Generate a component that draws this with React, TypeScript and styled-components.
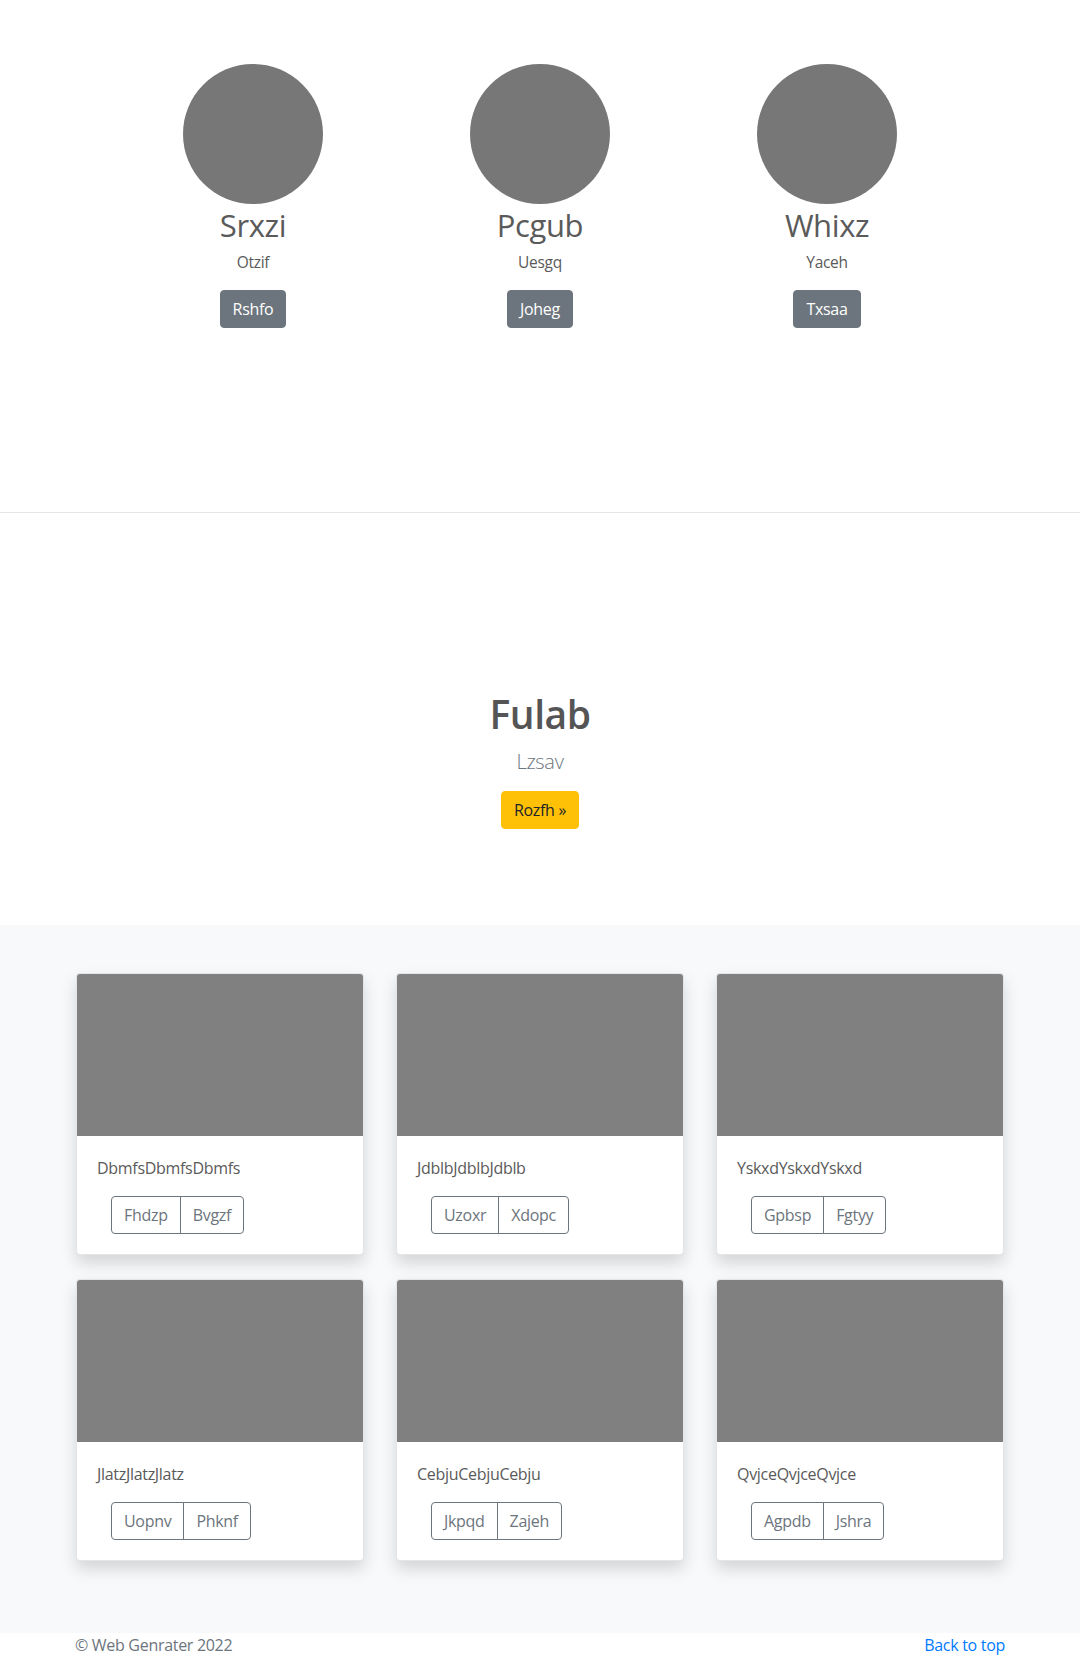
import React, { FunctionComponent } from "react";
import styled, { createGlobalStyle } from "styled-components";

const GlobalStyle = createGlobalStyle`
  * {
    box-sizing: border-box;
  }
  body {
    margin: 0;
    font-family: "Open Sans", "Liberation Sans", sans-serif;
    font-size: 16px;
    line-height: 1.5;
    letter-spacing: -0.3px;
    color: #5a5a5a;
    background: #fff;
  }
`;

const Palette = {
  text: "#5a5a5a",
  muted: "#6c757d",
  secondary: "#6c757d",
  warning: "#ffc107",
  dark: "#212529",
  light: "#f8f9fa",
  link: "#007bff",
  placeholder: "#808080",
  avatar: "#777777",
};

/* team row */

const Styles = {
  Team: styled.section`
    padding: 64px 0 184px;
  `,
  TeamRow: styled.div`
    display: grid;
    grid-template-columns: repeat(3, 287px);
    justify-content: center;
  `,
  Member: styled.div`
    display: flex;
    flex-direction: column;
    align-items: center;
    text-align: center;
  `,
  Avatar: styled.div`
    width: 140px;
    height: 140px;
    border-radius: 50%;
    background-color: ${Palette.avatar};
  `,
  Name: styled.h2`
    margin: 2px 0 6px;
    font-size: 31px;
    font-weight: 400;
    line-height: 38.4px;
    letter-spacing: -0.4px;
  `,
  Role: styled.p`
    margin: 0 0 16px;
    font-size: 15.5px;
    line-height: 24px;
  `,
  Divider: styled.hr`
    margin: 0;
    border: 0;
    border-top: 1px solid #e5e5e5;
  `,
};

const Button = styled.a<{ $variant: "secondary" | "warning" | "outline" }>`
  display: inline-block;
  padding: 6px 12px;
  font-size: 16px;
  line-height: 24px;
  border: 1px solid transparent;
  border-radius: 4px;
  text-decoration: none;
  cursor: pointer;
  color: ${(p) =>
    p.$variant === "secondary"
      ? "#fff"
      : p.$variant === "warning"
      ? Palette.dark
      : Palette.secondary};
  background-color: ${(p) =>
    p.$variant === "secondary"
      ? Palette.secondary
      : p.$variant === "warning"
      ? Palette.warning
      : "transparent"};
  border-color: ${(p) =>
    p.$variant === "warning" ? Palette.warning : Palette.secondary};
`;

/* hero */

const HeroStyles = {
  Container: styled.section`
    padding: 177px 0 96px;
    text-align: center;
  `,
  Title: styled.h1`
    margin: 0 0 9px;
    font-size: 39px;
    font-weight: 600;
    line-height: 48px;
    letter-spacing: -0.5px;
    color: #555;
  `,
  Lead: styled.p`
    margin: 0 0 14px;
    font-size: 20px;
    font-weight: 300;
    line-height: 30px;
    color: ${Palette.muted};
  `,
};

/* album */

const AlbumStyles = {
  Container: styled.section`
    background-color: ${Palette.light};
    padding: 48px 0 72px;
  `,
  Grid: styled.div`
    width: 928px;
    margin: 0 auto;
    display: grid;
    grid-template-columns: repeat(3, 1fr);
    column-gap: 32px;
    row-gap: 24px;
  `,
  Card: styled.div`
    background-color: #fff;
    border: 1px solid rgba(0, 0, 0, 0.1);
    border-radius: 4px;
    overflow: hidden;
    box-shadow: 0 8px 16px rgba(0, 0, 0, 0.15);
  `,
  Image: styled.div`
    height: 162px;
    background-color: ${Palette.placeholder};
  `,
  Body: styled.div`
    padding: 20px;
  `,
  Text: styled.p`
    margin: 0 0 16px;
  `,
  Group: styled.div`
    display: inline-flex;
    margin-left: 14px;
    ${Button} + ${Button} {
      margin-left: -1px;
      border-top-left-radius: 0;
      border-bottom-left-radius: 0;
    }
    ${Button}:not(:last-child) {
      border-top-right-radius: 0;
      border-bottom-right-radius: 0;
    }
  `,
};

/* footer */

const FooterStyles = {
  Container: styled.footer`
    width: 930px;
    margin: 0 auto;
    display: flex;
    justify-content: space-between;
    color: ${Palette.muted};
  `,
  Link: styled.a`
    color: ${Palette.link};
    text-decoration: none;
  `,
};

const members = [
  { name: "Srxzi", role: "Otzif", action: "Rshfo" },
  { name: "Pcgub", role: "Uesgq", action: "Joheg" },
  { name: "Whixz", role: "Yaceh", action: "Txsaa" },
];

const cards = [
  { text: "DbmfsDbmfsDbmfs", buttons: ["Fhdzp", "Bvgzf"] },
  { text: "JdblbJdblbJdblb", buttons: ["Uzoxr", "Xdopc"] },
  { text: "YskxdYskxdYskxd", buttons: ["Gpbsp", "Fgtyy"] },
  { text: "JlatzJlatzJlatz", buttons: ["Uopnv", "Phknf"] },
  { text: "CebjuCebjuCebju", buttons: ["Jkpqd", "Zajeh"] },
  { text: "QvjceQvjceQvjce", buttons: ["Agpdb", "Jshra"] },
];

const AlbumCard: FunctionComponent<{ text: string; buttons: string[] }> = ({
  text,
  buttons,
}) => {
  return (
    <AlbumStyles.Card>
      <AlbumStyles.Image />
      <AlbumStyles.Body>
        <AlbumStyles.Text>{text}</AlbumStyles.Text>
        <AlbumStyles.Group>
          {buttons.map((label) => (
            <Button key={label} $variant="outline">
              {label}
            </Button>
          ))}
        </AlbumStyles.Group>
      </AlbumStyles.Body>
    </AlbumStyles.Card>
  );
};

const App: FunctionComponent = () => {
  return (
    <>
      <GlobalStyle />
      <Styles.Team>
        <Styles.TeamRow>
          {members.map((m) => (
            <Styles.Member key={m.name}>
              <Styles.Avatar />
              <Styles.Name>{m.name}</Styles.Name>
              <Styles.Role>{m.role}</Styles.Role>
              <Button $variant="secondary">{m.action}</Button>
            </Styles.Member>
          ))}
        </Styles.TeamRow>
      </Styles.Team>
      <Styles.Divider />

      <HeroStyles.Container>
        <HeroStyles.Title>Fulab</HeroStyles.Title>
        <HeroStyles.Lead>Lzsav</HeroStyles.Lead>
        <Button $variant="warning">Rozfh »</Button>
      </HeroStyles.Container>

      <AlbumStyles.Container>
        <AlbumStyles.Grid>
          {cards.map((c) => (
            <AlbumCard key={c.text} text={c.text} buttons={c.buttons} />
          ))}
        </AlbumStyles.Grid>
      </AlbumStyles.Container>

      <FooterStyles.Container>
        <span>© Web Genrater 2022</span>
        <FooterStyles.Link href="#">Back to top</FooterStyles.Link>
      </FooterStyles.Container>
    </>
  );
};

export default App;
